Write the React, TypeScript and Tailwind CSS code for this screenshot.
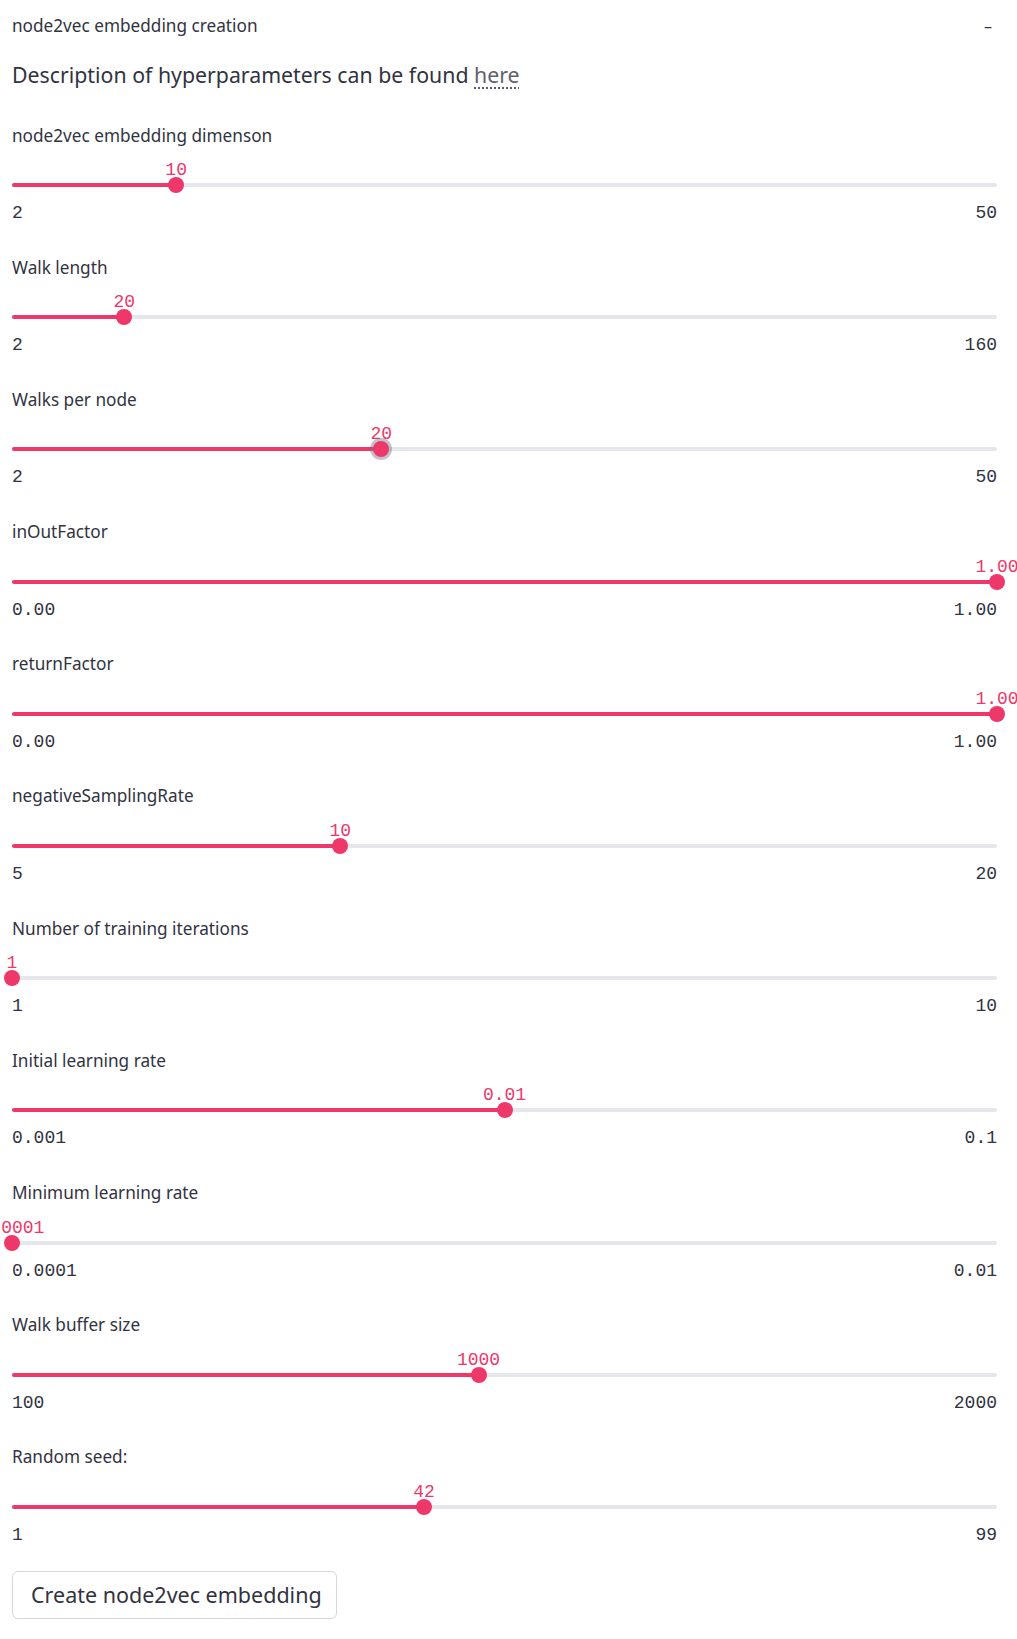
import React from 'react'

type SliderProps = {
  label: string
  value: string
  min: string
  max: string
  f: number
  focused?: boolean
}

const sliders: SliderProps[] = [
  { label: 'node2vec embedding dimenson', value: '10', min: '2', max: '50', f: 8 / 48 },
  { label: 'Walk length', value: '20', min: '2', max: '160', f: 18 / 158 },
  { label: 'Walks per node', value: '20', min: '2', max: '50', f: 18 / 48, focused: true },
  { label: 'inOutFactor', value: '1.00', min: '0.00', max: '1.00', f: 1 },
  { label: 'returnFactor', value: '1.00', min: '0.00', max: '1.00', f: 1 },
  { label: 'negativeSamplingRate', value: '10', min: '5', max: '20', f: 5 / 15 },
  { label: 'Number of training iterations', value: '1', min: '1', max: '10', f: 0 },
  { label: 'Initial learning rate', value: '0.01', min: '0.001', max: '0.1', f: 0.5 },
  { label: 'Minimum learning rate', value: '0.0001', min: '0.0001', max: '0.01', f: 0 },
  { label: 'Walk buffer size', value: '1000', min: '100', max: '2000', f: 900 / 1900 },
  { label: 'Random seed:', value: '42', min: '1', max: '99', f: 41 / 98 },
]

const mono = "font-['Liberation_Mono','DejaVu_Sans_Mono',monospace]"

function Slider({ label, value, min, max, f, focused }: SliderProps) {
  const pct = `${f * 100}%`
  return (
    <div className="h-[103px]">
      <div className="mt-[1.5px] h-6 leading-6 text-[17.2px] text-[#31333f]">{label}</div>
      <div className="h-[53.5px] pt-[35.5px]">
        <div className="relative h-1 rounded-full bg-[#e6e6ed]">
          <div className="absolute left-0 top-0 h-1 rounded-full bg-[#ee386a]" style={{ width: pct }} />
          <div
            className={`absolute top-[-22px] -translate-x-1/2 text-[18px] leading-[18px] text-[#ee386a] whitespace-nowrap ${mono}`}
            style={{ left: pct }}
          >
            {value}
          </div>
          <div
            className={
              focused
                ? 'absolute top-[-6px] w-4 h-4 -translate-x-1/2 rounded-full bg-[#ee386a] shadow-[0_0_0_3px_rgba(120,120,135,0.45)]'
                : 'absolute top-[-6px] w-4 h-4 -translate-x-1/2 rounded-full bg-[#ee386a]'
            }
            style={{ left: pct }}
          />
        </div>
      </div>
      <div className={`flex justify-between h-6 leading-6 text-[18px] text-[#31333f] ${mono}`}>
        <span>{min}</span>
        <span>{max}</span>
      </div>
    </div>
  )
}

export default function App() {
  return (
    <div className="w-[1017px] min-h-[1639px] overflow-hidden bg-white font-['Noto_Sans',sans-serif] text-[#31333f]">
      <div className="pl-3 pr-5">
        <div className="h-[52px] flex items-center justify-between">
          <span className="text-[17.2px]">node2vec embedding creation</span>
          <span className="mr-[5px] text-[16px]">–</span>
        </div>
        <div className="mt-2 h-[30px] leading-[30px] text-[21.3px]">
          Description of hyperparameters can be found{' '}
          <a className="text-[#5f606b] underline decoration-dotted underline-offset-4">here</a>
        </div>
        <div className="mt-8 flex flex-col gap-[29.2px]">
          {sliders.map((s) => (
            <Slider key={s.label} {...s} />
          ))}
        </div>
        <button className="mt-[24px] h-12 w-[325px] rounded-md border border-[#d6d6dc] text-left pl-[18px] text-[21.5px] text-[#31333f]">
          Create node2vec embedding
        </button>
      </div>
    </div>
  )
}
